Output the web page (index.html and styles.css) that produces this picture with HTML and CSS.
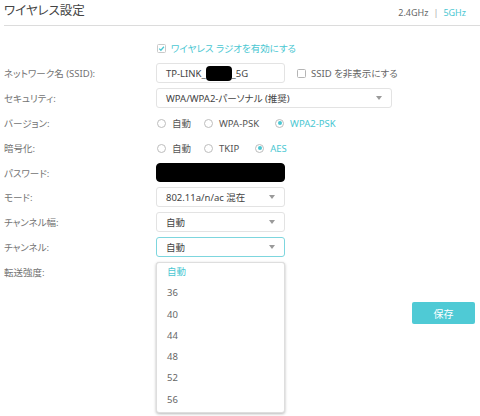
FILE: index.html
```html
<!DOCTYPE html>
<html lang="ja">
<head>
<meta charset="utf-8">
<title>ワイヤレス設定</title>
<link rel="stylesheet" href="styles.css">
</head>
<body>
<div class="page">
  <header class="head">
    <h1 class="title">ワイヤレス設定</h1>
    <div class="bands"><span class="band">2.4GHz</span><span class="sep">|</span><span class="band active">5GHz</span></div>
  </header>

  <div class="form">
    <div class="row">
      <div class="label"></div>
      <label class="check teal">
        <svg class="box" viewBox="0 0 9 9" width="9" height="9"><rect x="0.5" y="0.5" width="8" height="8" rx="1" fill="#fff" stroke="#c9c9c9"/><path d="M2.2 4.6 L3.9 6.2 L6.9 2.8" fill="none" stroke="#4ac7d2" stroke-width="1.3"/></svg>
        <span>ワイヤレス ラジオを有効にする</span>
      </label>
    </div>

    <div class="row">
      <div class="label">ネットワーク名 (SSID):</div>
      <div class="field short">TP-LINK_<span class="redact"></span>_5G</div>
      <label class="check hide">
        <svg class="box" viewBox="0 0 9 9" width="9" height="9"><rect x="0.5" y="0.5" width="8" height="8" rx="1" fill="#fff" stroke="#b5b5b5"/></svg>
        <span>SSID を非表示にする</span>
      </label>
    </div>

    <div class="row">
      <div class="label">セキュリティ:</div>
      <div class="field select long">WPA/WPA2-パーソナル (推奨)<i class="arrow"></i></div>
    </div>

    <div class="row">
      <div class="label">バージョン:</div>
      <div class="radios">
        <span class="radio r1"><i class="dot"></i>自動</span>
        <span class="radio r2"><i class="dot"></i>WPA-PSK</span>
        <span class="radio on"><i class="dot"></i>WPA2-PSK</span>
      </div>
    </div>

    <div class="row">
      <div class="label">暗号化:</div>
      <div class="radios">
        <span class="radio r1"><i class="dot"></i>自動</span>
        <span class="radio r2"><i class="dot"></i>TKIP</span>
        <span class="radio on"><i class="dot"></i>AES</span>
      </div>
    </div>

    <div class="row pw">
      <div class="label">パスワード:</div>
      <div class="field short black"></div>
    </div>

    <div class="row">
      <div class="label">モード:</div>
      <div class="field select short">802.11a/n/ac 混在<i class="arrow"></i></div>
    </div>

    <div class="row">
      <div class="label">チャンネル幅:</div>
      <div class="field select short">自動<i class="arrow"></i></div>
    </div>

    <div class="row">
      <div class="label">チャンネル:</div>
      <div class="combo">
        <div class="field select short focus">自動<i class="arrow"></i></div>
        <ul class="menu">
          <li class="sel">自動</li>
          <li>36</li>
          <li>40</li>
          <li>44</li>
          <li>48</li>
          <li>52</li>
          <li>56</li>
        </ul>
      </div>
    </div>

    <div class="row">
      <div class="label">転送強度:</div>
      <div class="field select short"><i class="arrow"></i></div>
    </div>

    <div class="actions">
      <button class="save">保存</button>
    </div>
  </div>
</div>
</body>
</html>
```

FILE: styles.css
```css
html, body {
  margin: 0;
  padding: 0;
  background: #fff;
}
body {
  font-family: "Noto Sans", "Noto Sans CJK JP", sans-serif;
  font-size: 9.5px;
  color: #555;
  font-feature-settings: "palt";
}
.page {
  width: 480px;
  height: 416px;
  overflow: hidden;
}
.head {
  margin-left: 4px;
  height: 26px;
  border-bottom: 1px solid #dcdcdc;
  display: flex;
  align-items: center;
  justify-content: space-between;
  padding-right: 14px;
  box-sizing: border-box;
}
.title {
  margin: 0;
  font-size: 12.5px;
  font-weight: normal;
  color: #444;
  line-height: 1;
  padding-bottom: 2px;
}
.bands {
  font-size: 9px;
  color: #666;
  display: flex;
  align-items: center;
  gap: 5px;
}
.bands .sep { color: #aaa; }
.bands .active { color: #4ac7d2; }

.form {
  margin-top: 12px;
  display: flex;
  flex-direction: column;
  gap: 5px;
}
.row {
  display: flex;
  align-items: center;
  height: 20px;
}
.row.pw { height: 19px; }
.label {
  width: 152px;
  padding-left: 4px;
  color: #737373;
  flex: none;
  white-space: nowrap;
}
.check {
  display: flex;
  align-items: center;
  gap: 5px;
}
.check .box { display: block; flex: none; }
.check.teal { color: #4ac7d2; margin-left: 1px; }
.check.hide { margin-left: 12px; color: #666; }

.field {
  box-sizing: border-box;
  height: 100%;
  border: 1px solid #e3e3e3;
  border-radius: 3px;
  padding: 0 9px;
  display: flex;
  align-items: center;
  color: #444;
  position: relative;
  background: #fff;
  white-space: nowrap;
}
.short { width: 129px; }
.long { width: 236px; }
.field.black {
  background: #000;
  border-color: #000;
  border-radius: 4px;
}
.field.focus { border-color: #7dd6de; }
.redact {
  display: inline-block;
  width: 26px;
  height: 15px;
  background: #000;
  border-radius: 4px;
}
.arrow {
  position: absolute;
  right: 9px;
  top: 50%;
  margin-top: -2px;
  width: 0;
  height: 0;
  border-left: 3.5px solid transparent;
  border-right: 3.5px solid transparent;
  border-top: 4px solid #9a9a9a;
}

.radios {
  display: flex;
  align-items: center;
  padding-left: 1px;
}
.radio {
  display: flex;
  align-items: center;
  gap: 6px;
  color: #555;
}
.radio.r1 { width: 47px; }
.radio.r2 { margin-right: 16px; }
.radio .dot {
  box-sizing: border-box;
  width: 9px;
  height: 9px;
  border-radius: 50%;
  border: 1px solid #bdbdbd;
  background: #fff;
  position: relative;
}
.radio.on { color: #4ac7d2; }
.radio.on .dot::after {
  content: "";
  position: absolute;
  left: 1.5px;
  top: 1.5px;
  width: 4px;
  height: 4px;
  border-radius: 50%;
  background: #4ac7d2;
}

.combo {
  position: relative;
  height: 100%;
}
.menu {
  position: absolute;
  left: 0;
  top: 25px;
  width: 129px;
  box-sizing: border-box;
  margin: 0;
  padding: 0;
  list-style: none;
  background: #fff;
  border: 1px solid #dedede;
  border-radius: 3px;
  box-shadow: 0 1px 3px rgba(0, 0, 0, 0.28);
  z-index: 2;
}
.menu li {
  height: 21.3px;
  line-height: 18px;
  padding-left: 10px;
  color: #666;
}
.menu li.sel { color: #4ac7d2; }

.actions {
  display: flex;
  justify-content: flex-end;
  padding-right: 5px;
  margin-top: 15px;
}
.save {
  width: 63px;
  height: 22px;
  border: none;
  border-radius: 2px;
  background: #4fcad5;
  color: #fff;
  font-family: "Noto Sans CJK JP", sans-serif;
  font-size: 10px;
  padding: 0;
}
```
